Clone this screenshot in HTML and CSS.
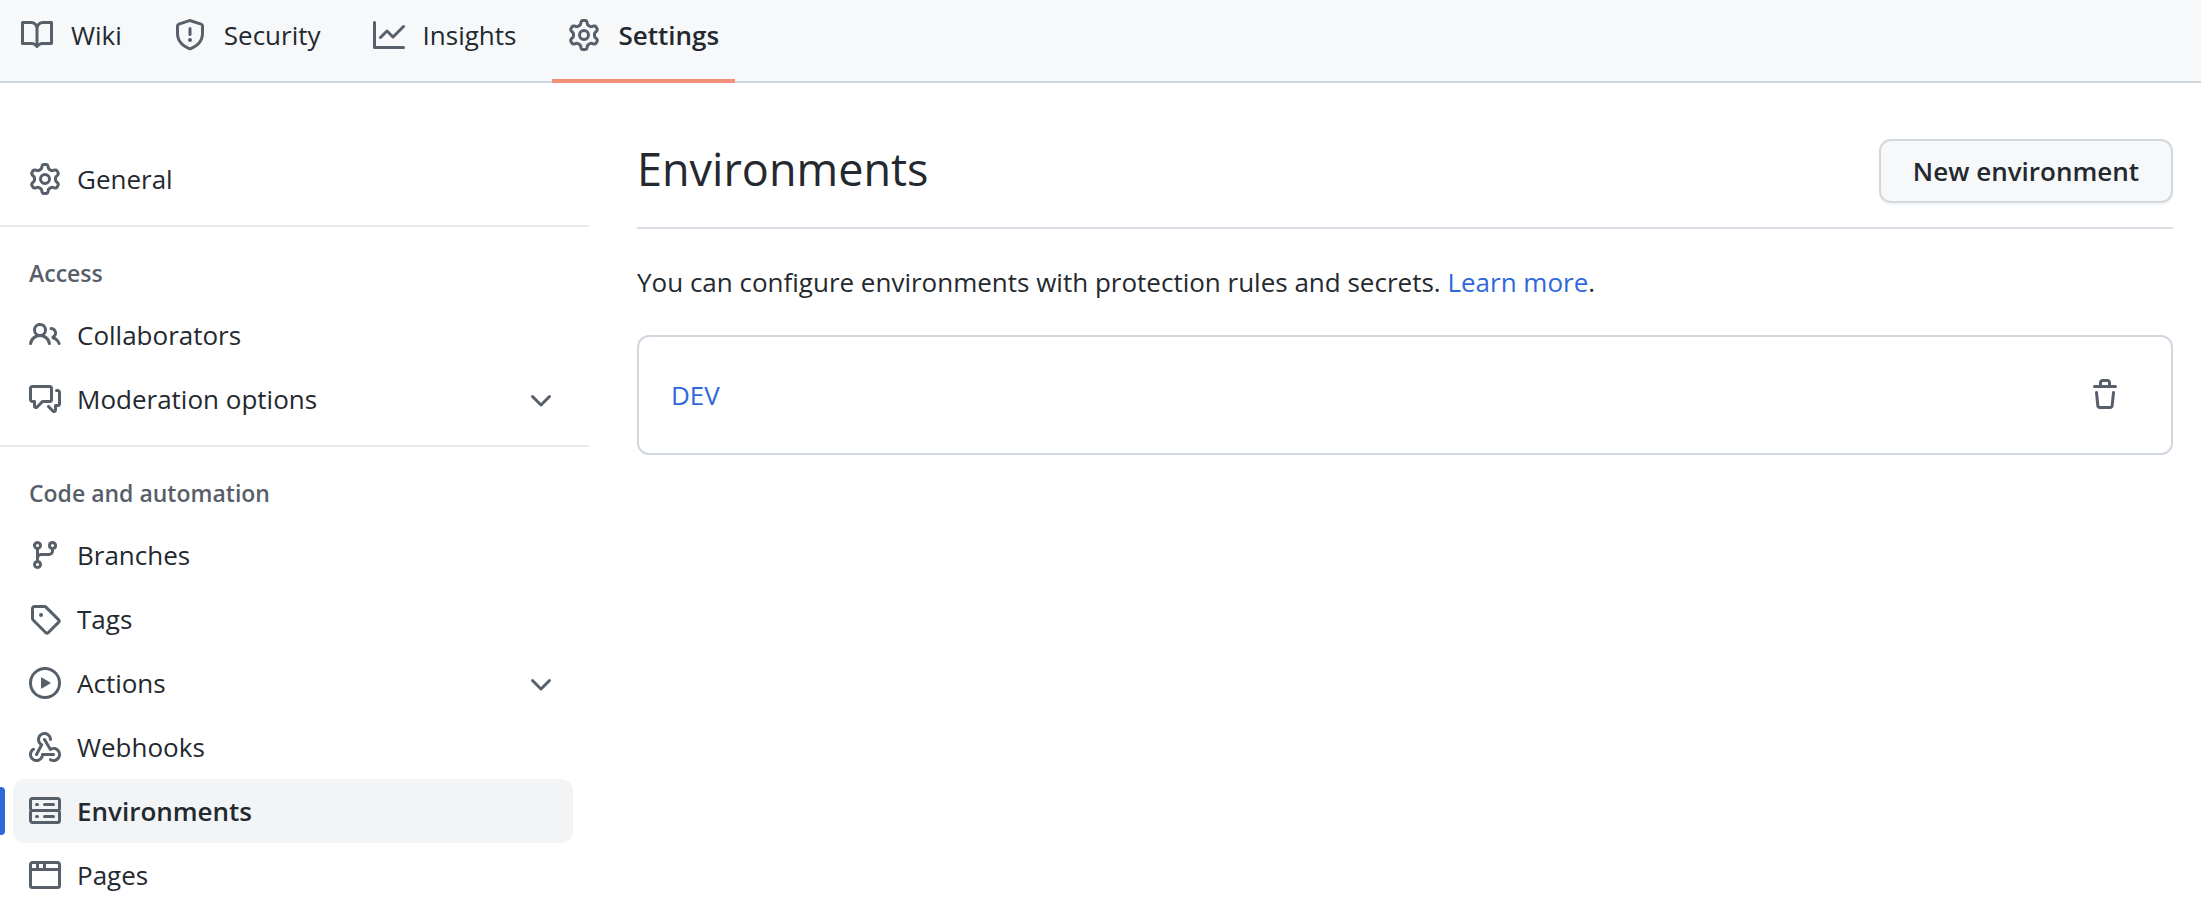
FILE: index.html
```html
<!DOCTYPE html>
<html lang="en">
<head>
<meta charset="utf-8">
<title>Environments</title>
<meta name="viewport" content="width=device-width, initial-scale=1">
<link rel="stylesheet" href="styles.css">
</head>
<body>
<svg class="sprite" aria-hidden="true">
  <symbol id="gear" viewBox="0 0 16 16"><path fill-rule="evenodd" d="M7.429 1.525a6.593 6.593 0 011.142 0c.036.003.108.036.137.146l.289 1.105c.147.56.55.967.997 1.189.174.086.341.183.501.29.417.278.97.423 1.53.27l1.102-.303c.11-.03.175.016.195.046.219.31.41.641.573.989.014.031.022.11-.059.19l-.815.806c-.411.406-.562.957-.53 1.456a4.588 4.588 0 010 .582c-.032.499.119 1.05.53 1.456l.815.806c.08.08.073.159.059.19a6.494 6.494 0 01-.573.99c-.02.029-.086.074-.195.045l-1.103-.303c-.559-.153-1.112-.008-1.529.27-.16.107-.327.204-.5.29-.449.222-.851.628-.998 1.189l-.289 1.105c-.029.11-.101.143-.137.146a6.613 6.613 0 01-1.142 0c-.036-.003-.108-.037-.137-.146l-.289-1.105c-.147-.56-.55-.967-.997-1.189a4.502 4.502 0 01-.501-.29c-.417-.278-.97-.423-1.53-.27l-1.102.303c-.11.03-.175-.016-.195-.046a6.492 6.492 0 01-.573-.989c-.014-.031-.022-.11.059-.19l.815-.806c.411-.406.562-.957.53-1.456a4.587 4.587 0 010-.582c.032-.499-.119-1.05-.53-1.456l-.815-.806c-.08-.08-.073-.159-.059-.19a6.44 6.44 0 01.573-.99c.02-.029.086-.075.195-.045l1.103.303c.559.153 1.112.008 1.529-.27.16-.107.327-.204.5-.29.449-.222.851-.628.998-1.189l.289-1.105c.029-.11.101-.143.137-.146zM8 0c-.236 0-.47.01-.701.03-.743.065-1.29.615-1.458 1.261l-.29 1.106c-.017.066-.078.158-.211.224a5.994 5.994 0 00-.668.386c-.123.082-.233.09-.3.071L3.27 2.776c-.644-.177-1.392.02-1.82.63a7.977 7.977 0 00-.704 1.217c-.315.675-.111 1.422.363 1.891l.815.806c.05.048.098.147.088.294a6.084 6.084 0 000 .772c.01.147-.038.246-.088.294l-.815.806c-.474.469-.678 1.216-.363 1.891.2.428.436.835.704 1.218.428.609 1.176.806 1.82.63l1.103-.303c.066-.019.176-.011.299.071.213.143.436.272.668.386.133.066.194.158.212.224l.289 1.106c.169.646.715 1.196 1.458 1.26a8.094 8.094 0 001.402 0c.743-.064 1.29-.614 1.458-1.26l.29-1.106c.017-.066.078-.158.211-.224a5.98 5.98 0 00.668-.386c.123-.082.233-.09.3-.071l1.102.302c.644.177 1.392-.02 1.82-.63.268-.382.505-.789.704-1.217.315-.675.111-1.422-.364-1.891l-.814-.806c-.05-.048-.098-.147-.088-.294a6.1 6.1 0 000-.772c-.01-.147.039-.246.088-.294l.814-.806c.475-.469.679-1.216.364-1.891a7.992 7.992 0 00-.704-1.218c-.428-.609-1.176-.806-1.82-.63l-1.103.303c-.066.019-.176.011-.299-.071a5.991 5.991 0 00-.668-.386c-.133-.066-.194-.158-.212-.224L10.16 1.29C9.99.645 9.444.095 8.701.031A8.094 8.094 0 008 0zm1.5 8a1.5 1.5 0 11-3 0 1.5 1.5 0 013 0zM11 8a3 3 0 11-6 0 3 3 0 016 0z"/></symbol>
  <symbol id="chevron" viewBox="0 0 16 16"><path d="M12.78 6.22a.75.75 0 010 1.06l-4.25 4.25a.75.75 0 01-1.06 0L3.22 7.28a.75.75 0 011.06-1.06L8 9.94l3.72-3.72a.75.75 0 011.06 0z"/></symbol>
</svg>

<nav class="tabs" aria-label="Repository">
  <a class="tab" href="#wiki"><svg class="icon" viewBox="0 0 16 16" aria-hidden="true"><path fill-rule="evenodd" d="M0 1.75A.75.75 0 01.75 1h4.253c1.227 0 2.317.59 3 1.501A3.744 3.744 0 0111.006 1h4.245a.75.75 0 01.75.75v10.5a.75.75 0 01-.75.75h-4.507a2.25 2.25 0 00-1.591.659l-.622.621a.75.75 0 01-1.06 0l-.622-.621A2.25 2.25 0 005.258 13H.75a.75.75 0 01-.75-.75V1.75zm8.755 3a2.25 2.25 0 012.25-2.25H14.5v9h-3.757c-.71 0-1.4.201-1.992.572l.004-7.322zm-1.504 7.324l.004-5.073-.002-2.253A2.25 2.25 0 005.003 2.5H1.5v9h3.757a3.75 3.75 0 011.994.574z"/></svg><span>Wiki</span></a>
  <a class="tab" href="#security"><svg class="icon" viewBox="0 0 16 16" aria-hidden="true"><path fill-rule="evenodd" d="M7.467.133a1.75 1.75 0 011.066 0l5.25 1.68A1.75 1.75 0 0115 3.48V7c0 1.566-.32 3.182-1.303 4.682-.983 1.498-2.585 2.813-5.032 3.855a1.7 1.7 0 01-1.33 0c-2.447-1.042-4.049-2.357-5.032-3.855C1.32 10.182 1 8.566 1 7V3.48a1.75 1.75 0 011.217-1.667l5.25-1.68zm.61 1.429a.25.25 0 00-.153 0l-5.25 1.68a.25.25 0 00-.174.238V7c0 1.358.275 2.666 1.057 3.86.784 1.194 2.121 2.34 4.366 3.297a.2.2 0 00.154 0c2.245-.956 3.582-2.104 4.366-3.298C13.225 9.666 13.5 8.36 13.5 7V3.48a.25.25 0 00-.174-.237l-5.25-1.68zM9 10.5a1 1 0 11-2 0 1 1 0 012 0zm-.25-5.75a.75.75 0 10-1.5 0v3a.75.75 0 001.5 0v-3z"/></svg><span>Security</span></a>
  <a class="tab" href="#insights"><svg class="icon" viewBox="0 0 16 16" aria-hidden="true"><path d="M1.5 1.75a.75.75 0 00-1.5 0v12.5c0 .414.336.75.75.75h14.5a.75.75 0 000-1.5H1.5V1.75zm14.28 2.53a.75.75 0 00-1.06-1.06L10 7.94 7.53 5.47a.75.75 0 00-1.06 0L3.22 8.72a.75.75 0 001.06 1.06L7 7.06l2.47 2.47a.75.75 0 001.06 0l5.25-5.25z"/></svg><span>Insights</span></a>
  <a class="tab tab-current" href="#settings" aria-current="page"><svg class="icon" aria-hidden="true"><use href="#gear"/></svg><span>Settings</span></a>
</nav>

<div class="layout">
  <nav class="sidebar" aria-label="Settings">
    <ul class="group">
      <li><a class="item" href="#general"><svg class="icon" aria-hidden="true"><use href="#gear"/></svg><span>General</span></a></li>
    </ul>
    <section class="section">
      <h2 class="heading">Access</h2>
      <ul class="group">
        <li><a class="item" href="#collaborators"><svg class="icon" viewBox="0 0 16 16" aria-hidden="true"><path fill-rule="evenodd" d="M5.5 3.5a2 2 0 100 4 2 2 0 000-4zM2 5.5a3.5 3.5 0 115.898 2.549 5.507 5.507 0 013.034 4.084.75.75 0 11-1.482.235 4.001 4.001 0 00-7.9 0 .75.75 0 01-1.482-.236A5.507 5.507 0 013.102 8.05 3.49 3.49 0 012 5.5zM11 4a.75.75 0 100 1.5 1.5 1.5 0 01.666 2.844.75.75 0 00-.416.672v.352a.75.75 0 00.574.73c1.2.289 2.162 1.2 2.522 2.372a.75.75 0 101.434-.44 5.01 5.01 0 00-2.56-3.012A3 3 0 0011 4z"/></svg><span>Collaborators</span></a></li>
        <li><button class="item" type="button" aria-expanded="false"><svg class="icon" viewBox="0 0 16 16" aria-hidden="true"><path fill-rule="evenodd" d="M1.5 2.75a.25.25 0 01.25-.25h8.5a.25.25 0 01.25.25v5.5a.25.25 0 01-.25.25h-3.5a.75.75 0 00-.53.22L3.5 11.44V9.25a.75.75 0 00-.75-.75h-1a.25.25 0 01-.25-.25v-5.5zM1.75 1A1.75 1.75 0 000 2.75v5.5C0 9.216.784 10 1.75 10H2v1.543a1.457 1.457 0 002.487 1.03L7.061 10h3.189A1.75 1.75 0 0012 8.25v-5.5A1.75 1.75 0 0010.25 1h-8.5zM14.5 4.75a.25.25 0 00-.25-.25h-.5a.75.75 0 110-1.5h.5c.966 0 1.75.784 1.75 1.75v5.5A1.75 1.75 0 0114.25 12H14v1.543a1.457 1.457 0 01-2.487 1.03L9.22 12.28a.75.75 0 111.06-1.06l2.22 2.22v-2.19a.75.75 0 01.75-.75h1a.25.25 0 00.25-.25v-5.5z"/></svg><span>Moderation options</span><svg class="icon chevron" aria-hidden="true"><use href="#chevron"/></svg></button></li>
      </ul>
    </section>
    <section class="section">
      <h2 class="heading">Code and automation</h2>
      <ul class="group">
        <li><a class="item" href="#branches"><svg class="icon" viewBox="0 0 16 16" aria-hidden="true"><path fill-rule="evenodd" d="M11.75 2.5a.75.75 0 100 1.5.75.75 0 000-1.5zm-2.25.75a2.25 2.25 0 113 2.122V6A2.5 2.5 0 0110 8.5H6a1 1 0 00-1 1v1.128a2.251 2.251 0 11-1.5 0V5.372a2.25 2.25 0 111.5 0v1.836A2.492 2.492 0 016 7h4a1 1 0 001-1v-.628A2.25 2.25 0 019.5 3.25zM4.25 12a.75.75 0 100 1.5.75.75 0 000-1.5zM3.5 3.25a.75.75 0 111.5 0 .75.75 0 01-1.5 0z"/></svg><span>Branches</span></a></li>
        <li><a class="item" href="#tags"><svg class="icon" viewBox="0 0 16 16" aria-hidden="true"><path fill-rule="evenodd" d="M2.5 7.775V2.75a.25.25 0 01.25-.25h5.025a.25.25 0 01.177.073l6.25 6.25a.25.25 0 010 .354l-5.025 5.025a.25.25 0 01-.354 0l-6.25-6.25a.25.25 0 01-.073-.177zm-1.5 0V2.75C1 1.784 1.784 1 2.75 1h5.025c.464 0 .91.184 1.238.513l6.25 6.25a1.75 1.75 0 010 2.474l-5.026 5.026a1.75 1.75 0 01-2.474 0l-6.25-6.25A1.75 1.75 0 011 7.775zM6 5a1 1 0 100 2 1 1 0 000-2z"/></svg><span>Tags</span></a></li>
        <li><button class="item" type="button" aria-expanded="false"><svg class="icon" viewBox="0 0 16 16" aria-hidden="true"><path fill-rule="evenodd" d="M1.5 8a6.5 6.5 0 1113 0 6.5 6.5 0 01-13 0zM8 0a8 8 0 100 16A8 8 0 008 0zM6.379 5.227A.25.25 0 006 5.442v5.117a.25.25 0 00.379.214l4.264-2.559a.25.25 0 000-.428L6.379 5.227z"/></svg><span>Actions</span><svg class="icon chevron" aria-hidden="true"><use href="#chevron"/></svg></button></li>
        <li><a class="item" href="#webhooks"><svg class="icon" viewBox="0 0 16 16" aria-hidden="true"><path d="M5.5 4.25a2.25 2.25 0 014.5 0 .75.75 0 001.5 0 3.75 3.75 0 10-6.14 2.889l-2.272 4.258a.75.75 0 001.324.706L7 7.25a.75.75 0 00-.309-1.015A2.25 2.25 0 015.5 4.25z"/><path d="M7.364 3.607a.75.75 0 011.03.257l2.608 4.349a3.75 3.75 0 11-.628 6.785.75.75 0 01.752-1.299 2.25 2.25 0 10-.033-3.88.75.75 0 01-1.03-.256L7.107 4.636a.75.75 0 01.257-1.03z"/><path d="M2.9 8.776A.75.75 0 012.625 9.8 2.25 2.25 0 106 11.75a.75.75 0 01.75-.751h5.5a.75.75 0 010 1.5H7.425a3.751 3.751 0 11-5.55-3.998.75.75 0 011.024.274z"/></svg><span>Webhooks</span></a></li>
        <li><a class="item item-current" href="#environments" aria-current="page"><svg class="icon" viewBox="0 0 16 16" aria-hidden="true"><path fill-rule="evenodd" d="M1.75 1A1.75 1.75 0 000 2.75v4c0 .372.116.717.314 1a1.742 1.742 0 00-.314 1v4c0 .966.784 1.75 1.75 1.75h12.5A1.75 1.75 0 0016 12.75v-4c0-.372-.116-.717-.314-1 .198-.283.314-.628.314-1v-4A1.75 1.75 0 0014.25 1H1.75zm0 7.5a.25.25 0 00-.25.25v4c0 .138.112.25.25.25h12.5a.25.25 0 00.25-.25v-4a.25.25 0 00-.25-.25H1.75zM1.5 2.75a.25.25 0 01.25-.25h12.5a.25.25 0 01.25.25v4a.25.25 0 01-.25.25H1.75a.25.25 0 01-.25-.25v-4zm5.5 2A.75.75 0 017.75 4h4.5a.75.75 0 010 1.5h-4.5A.75.75 0 017 4.75zM7.75 10a.75.75 0 000 1.5h4.5a.75.75 0 000-1.5h-4.5zM3 4.75A.75.75 0 013.75 4h.5a.75.75 0 010 1.5h-.5A.75.75 0 013 4.75zM3.75 10a.75.75 0 000 1.5h.5a.75.75 0 000-1.5h-.5z"/></svg><span>Environments</span></a></li>
        <li><a class="item" href="#pages"><svg class="icon" viewBox="0 0 16 16" aria-hidden="true"><path fill-rule="evenodd" d="M0 2.75C0 1.784.784 1 1.75 1h12.5c.966 0 1.75.784 1.75 1.75v10.5A1.75 1.75 0 0114.25 15H1.75A1.75 1.75 0 010 13.25V2.75zm1.75-.25a.25.25 0 00-.25.25V4.5h2v-2H1.75zM5 2.5v2h2v-2H5zm3.5 0v2h6V2.75a.25.25 0 00-.25-.25H8.5zm6 3.5h-13v7.25c0 .138.112.25.25.25h12.5a.25.25 0 00.25-.25V6z"/></svg><span>Pages</span></a></li>
      </ul>
    </section>
  </nav>

  <main class="main">
    <header class="main-header">
      <h1 class="title">Environments</h1>
      <button class="new-button" type="button">New environment</button>
    </header>
    <p class="intro">You can configure environments with protection rules and secrets. <a class="link" href="#learn">Learn more</a>.</p>
    <ul class="card">
      <li class="row">
        <a class="link" href="#dev">DEV</a>
        <button class="delete" type="button" aria-label="Delete DEV"><svg class="icon" viewBox="0 0 16 16" aria-hidden="true"><path fill-rule="evenodd" d="M6.5 1.75a.25.25 0 01.25-.25h2.5a.25.25 0 01.25.25V3h-3V1.75zm4.5 0V3h2.25a.75.75 0 010 1.5H2.75a.75.75 0 010-1.5H5V1.75C5 .784 5.784 0 6.75 0h2.5C10.216 0 11 .784 11 1.75zM4.496 6.675a.75.75 0 10-1.492.15l.66 6.6A1.75 1.75 0 005.405 15h5.19c.9 0 1.652-.681 1.741-1.576l.66-6.6a.75.75 0 00-1.492-.149l-.66 6.6a.25.25 0 01-.249.225h-5.19a.25.25 0 01-.249-.225l-.66-6.6z"/></svg></button>
      </li>
    </ul>
  </main>
</div>
</body>
</html>
```

FILE: styles.css
```css
* {
  box-sizing: border-box;
}

body {
  margin: 0;
  background: #ffffff;
  color: #24292f;
  font-family: "Open Sans", "Noto Sans", sans-serif;
  font-size: 26px;
  line-height: 40px;
}

h1,
h2,
p,
ul {
  margin: 0;
  padding: 0;
}

ul {
  list-style: none;
}

a {
  color: inherit;
  text-decoration: none;
}

button {
  font: inherit;
  color: inherit;
  cursor: pointer;
}

.sprite {
  display: none;
}

.icon {
  flex: none;
  width: 32px;
  height: 32px;
  fill: #57606a;
}

.tabs {
  display: flex;
  gap: 20px;
  padding-left: 5px;
  background: #f6f8fa;
  box-shadow: inset 0 -2px #d0d7de;
}

.tab {
  display: flex;
  align-items: center;
  gap: 18px;
  padding: 15px 16px 24px;
  border-bottom: 4px solid transparent;
}

.tab-current {
  border-bottom-color: #f2907a;
  font-weight: 600;
}

.layout {
  display: flex;
  gap: 48px;
  padding-right: 28px;
}

.sidebar {
  flex: none;
  width: 589px;
  padding-top: 64px;
}

.section {
  margin-top: 14px;
  padding-top: 26px;
  border-top: 2px solid #e7ecf0;
}

.heading {
  padding: 0 29px 10px;
  color: #57606a;
  font-size: 23px;
  font-weight: 600;
  line-height: 40px;
}

.group {
  padding: 0 16px 0 13px;
}

.item {
  position: relative;
  display: flex;
  align-items: center;
  gap: 16px;
  width: 100%;
  padding: 12px 16px;
  border: 0;
  border-radius: 12px;
  background: transparent;
  text-align: left;
}

.item-current {
  background: #f3f4f6;
  font-weight: 600;
}

.item-current::before {
  content: "";
  position: absolute;
  top: 8px;
  bottom: 8px;
  left: -16px;
  width: 8px;
  border-radius: 4px;
  background: #2f68da;
}

.chevron {
  margin-left: auto;
}

.main {
  flex: 1;
  min-width: 0;
  padding-top: 56px;
}

.main-header {
  display: flex;
  align-items: flex-start;
  justify-content: space-between;
  padding-bottom: 24px;
  border-bottom: 2px solid #d8dee4;
}

.title {
  font-size: 45px;
  font-weight: 400;
  line-height: 60px;
}

.new-button {
  padding: 10px 32px;
  border: 2px solid #d3d8dd;
  border-radius: 12px;
  background: #f6f8fa;
  box-shadow: 0 2px #f4f5f6;
  font-weight: 600;
}

.intro {
  margin: 33px 0;
}

.link {
  color: #2f68da;
}

.card {
  border: 2px solid #d0d7de;
  border-radius: 12px;
}

.row {
  display: flex;
  align-items: center;
  justify-content: space-between;
  padding: 32px;
}

.delete {
  display: flex;
  padding: 10px 18px;
  border: 0;
  background: transparent;
}
```
